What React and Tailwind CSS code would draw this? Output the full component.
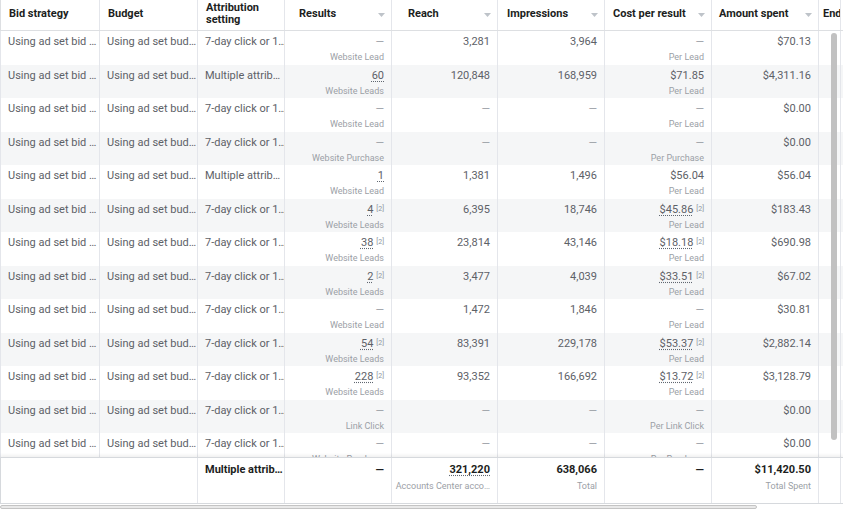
import React from 'react';

const W = [99, 98, 87, 107, 106, 107, 107, 107];

const BID = 'Using ad set bid …';
const BUD = 'Using ad set bud…';
const SEVEN = '7-day click or 1…';
const MULTI = 'Multiple attrib…';

// res / cost: null means "—"
const rows = [
  { attr: SEVEN, res: null, resLabel: 'Website Lead', reach: '3,281', impr: '3,964', cost: null, costLabel: 'Per Lead', spent: '$70.13' },
  { attr: MULTI, res: '60', resLabel: 'Website Leads', reach: '120,848', impr: '168,959', cost: '$71.85', costLabel: 'Per Lead', spent: '$4,311.16' },
  { attr: SEVEN, res: null, resLabel: 'Website Lead', reach: null, impr: null, cost: null, costLabel: 'Per Lead', spent: '$0.00' },
  { attr: SEVEN, res: null, resLabel: 'Website Purchase', reach: null, impr: null, cost: null, costLabel: 'Per Purchase', spent: '$0.00' },
  { attr: MULTI, res: '1', resLabel: 'Website Lead', reach: '1,381', impr: '1,496', cost: '$56.04', costLabel: 'Per Lead', spent: '$56.04' },
  { attr: SEVEN, res: '4', note: true, resLabel: 'Website Leads', reach: '6,395', impr: '18,746', cost: '$45.86', costNote: true, costLabel: 'Per Lead', spent: '$183.43' },
  { attr: SEVEN, res: '38', note: true, resLabel: 'Website Leads', reach: '23,814', impr: '43,146', cost: '$18.18', costNote: true, costLabel: 'Per Lead', spent: '$690.98' },
  { attr: SEVEN, res: '2', note: true, resLabel: 'Website Leads', reach: '3,477', impr: '4,039', cost: '$33.51', costNote: true, costLabel: 'Per Lead', spent: '$67.02' },
  { attr: SEVEN, res: null, resLabel: 'Website Lead', reach: '1,472', impr: '1,846', cost: null, costLabel: 'Per Lead', spent: '$30.81' },
  { attr: SEVEN, res: '54', note: true, resLabel: 'Website Leads', reach: '83,391', impr: '229,178', cost: '$53.37', costNote: true, costLabel: 'Per Lead', spent: '$2,882.14' },
  { attr: SEVEN, res: '228', note: true, resLabel: 'Website Leads', reach: '93,352', impr: '166,692', cost: '$13.72', costNote: true, costLabel: 'Per Lead', spent: '$3,128.79' },
  { attr: SEVEN, res: null, resLabel: 'Link Click', reach: null, impr: null, cost: null, costLabel: 'Per Link Click', spent: '$0.00' },
  { attr: SEVEN, res: null, resLabel: 'Website Purchase', reach: null, impr: null, cost: null, costLabel: 'Per Purchase', spent: '$0.00' },
];

function Caret() {
  return (
    <svg width="7" height="4" viewBox="0 0 7 4" className="ml-auto mr-[6px] mt-[2px] shrink-0">
      <path d="M0 0 L7 0 L3.5 4 Z" fill="#bec3c9" />
    </svg>
  );
}

function HeadCell({ w, children, sort, pl = 'pl-2' }) {
  return (
    <div style={{ width: w }} className={`shrink-0 h-full flex items-center pb-[2px] border-r border-[#e4e6eb] ${pl}`}>
      <span className="leading-[12px]">{children}</span>
      {sort && <Caret />}
    </div>
  );
}

function TextCell({ w, children }) {
  return (
    <div style={{ width: w }} className="shrink-0 h-full border-r border-[#e4e6eb] pl-[7px] pr-1 pt-[4px] leading-[14px] whitespace-nowrap overflow-hidden">
      {children}
    </div>
  );
}

function Value({ v, dotted, note, bold }) {
  if (v === null) {
    return <span className={bold ? 'text-[#1c1e21] font-bold' : 'text-[#9ba0a6]'}>—</span>;
  }
  return (
    <span>
      <span className={dotted ? 'underline decoration-dotted decoration-[#606770] underline-offset-[2px]' : ''}>{v}</span>
      {note && <span className="text-[7px] text-[#8d949e] align-top ml-[3px] relative top-[-1px]">[2]</span>}
    </span>
  );
}

function NumCell({ w, v, label, dotted, note, bold, pt = 'pt-[4px]', gap = 'mt-[2px]' }) {
  return (
    <div style={{ width: w }} className={`shrink-0 h-full border-r border-[#e4e6eb] pr-[7px] text-right whitespace-nowrap overflow-hidden ${pt}`}>
      <div className={`leading-[14px] ${bold ? 'font-bold text-[#1c1e21]' : ''}`}>
        <Value v={v} dotted={dotted} note={note} bold={bold} />
      </div>
      {label && <div className={`leading-[12px] text-[9px] text-[#9ba0a6] ${gap}`}>{label}</div>}
    </div>
  );
}

export default function App() {
  return (
    <div className="w-[843px] h-[512px] bg-white overflow-hidden relative font-['Roboto','Liberation_Sans',sans-serif] text-[11px] text-[#5d6167]">
      <div className="flex flex-col h-full">
        {/* header */}
        <div className="h-[31px] shrink-0 flex border-b border-[#dddfe2] font-bold text-[#1c1e21] border-l">
          <HeadCell w={W[0]}>Bid strategy</HeadCell>
          <HeadCell w={W[1]}>Budget</HeadCell>
          <HeadCell w={W[2]}>Attribution<br />setting</HeadCell>
          <HeadCell w={W[3]} sort pl="pl-[14px]">Results</HeadCell>
          <HeadCell w={W[4]} sort pl="pl-[16px]">Reach</HeadCell>
          <HeadCell w={W[5]} sort pl="pl-[9px]">Impressions</HeadCell>
          <HeadCell w={W[6]} sort pl="pl-[8px]">Cost per result</HeadCell>
          <HeadCell w={W[7]} sort pl="pl-[7px]">Amount spent</HeadCell>
          <div className="w-[22px] shrink-0 h-full flex items-center pb-[2px] pl-[4px] border-r border-[#e4e6eb] overflow-hidden whitespace-nowrap">End date</div>
        </div>

        {/* body */}
        <div className="h-[426px] shrink-0 overflow-hidden">
          {rows.map((r, i) => (
            <div key={i} className={`h-[33.5px] flex border-l border-[#e4e6eb] ${i % 2 === 1 ? 'bg-[#f5f6f7]' : 'bg-white'}`}>
              <TextCell w={W[0]}>{BID}</TextCell>
              <TextCell w={W[1]}>{BUD}</TextCell>
              <TextCell w={W[2]}>{r.attr}</TextCell>
              <NumCell w={W[3]} v={r.res} label={r.resLabel} dotted note={r.note} />
              <NumCell w={W[4]} v={r.reach} />
              <NumCell w={W[5]} v={r.impr} />
              <NumCell w={W[6]} v={r.cost} label={r.costLabel} dotted={r.costNote} note={r.costNote} />
              <NumCell w={W[7]} v={r.spent} />
              <div className="w-[22px] shrink-0 h-full border-r border-[#e4e6eb]" />
            </div>
          ))}
        </div>

        {/* footer totals */}
        <div className="h-[47px] shrink-0 flex border-t border-b border-[#d6d9dd] border-l shadow-[0_-2px_3px_rgba(0,0,0,0.06)] bg-white relative">
          <div style={{ width: W[0] + W[1] }} className="shrink-0 h-full border-r border-[#e4e6eb]" />
          <div style={{ width: W[2] }} className="shrink-0 h-full border-r border-[#e4e6eb] pl-[7px] pt-[5px] leading-[14px] font-bold text-[#1c1e21] whitespace-nowrap overflow-hidden">
            {MULTI}
          </div>
          <NumCell w={W[3]} v={null} bold pt="pt-[5px]" />
          <NumCell w={W[4]} v="321,220" dotted bold label="Accounts Center acco…" pt="pt-[5px]" gap="mt-[3px]" />
          <NumCell w={W[5]} v="638,066" bold label="Total" pt="pt-[5px]" gap="mt-[3px]" />
          <NumCell w={W[6]} v={null} bold pt="pt-[5px]" />
          <NumCell w={W[7]} v="$11,420.50" bold label="Total Spent" pt="pt-[5px]" gap="mt-[3px]" />
          <div className="w-[22px] shrink-0 h-full border-r border-[#e4e6eb]" />
        </div>

        {/* horizontal scrollbar */}
        <div className="h-[8px] shrink-0 pt-[1px]">
          <div className="w-[757px] h-[4px] rounded-full border border-[#c4c4c4] bg-[#e9e9e9]" />
        </div>
      </div>

      {/* vertical scrollbar thumb */}
      <div className="absolute left-[831px] top-[33px] w-[6px] h-[407px] rounded-full bg-[#c1c1c1]" />
    </div>
  );
}
